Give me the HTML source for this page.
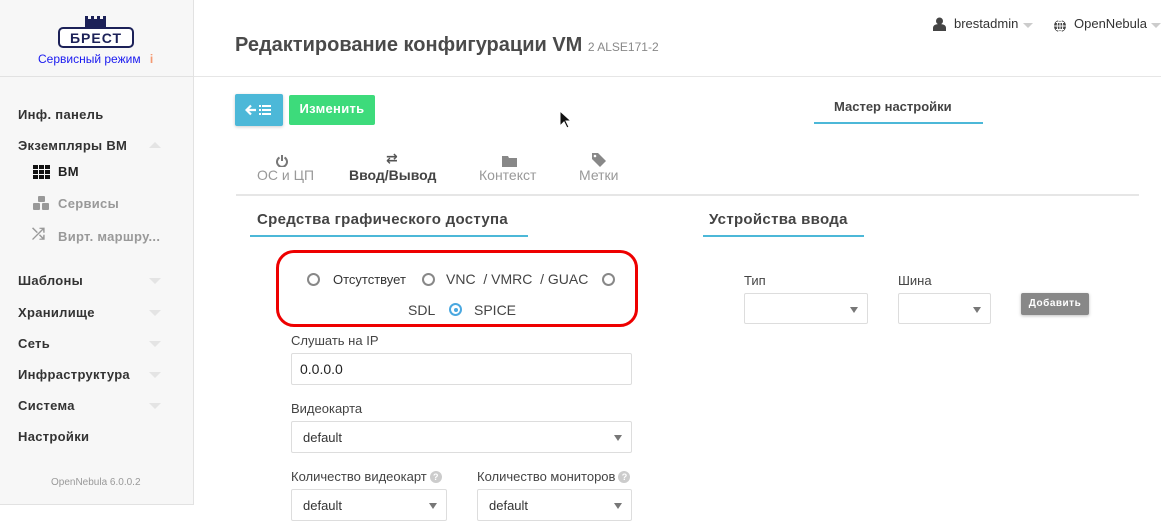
<!DOCTYPE html>
<html><head><meta charset="utf-8"><style>
*{box-sizing:border-box;margin:0;padding:0}
body{width:1161px;height:528px;overflow:hidden;background:#fff;font-family:"Liberation Sans","DejaVu Sans",sans-serif;color:#555;position:relative}
.a{position:absolute;white-space:nowrap}
#sb{position:absolute;left:0;top:0;width:194px;height:505px;background:#f7f7f7;border-right:1px solid #e2e2e2;border-bottom:1px solid #e2e2e2}
.nav{position:absolute;left:18px;font-size:13px;font-weight:bold;color:#333;letter-spacing:.3px}
.car{position:absolute;left:149px;width:0;height:0;border-left:6px solid transparent;border-right:6px solid transparent;border-top:6px solid #e4e4e4}
.sel{position:absolute;border:1px solid #ddd;border-radius:2px;background:#fff;height:32px;font-size:13px;color:#333;padding:8px 11px}
.sel:after{content:"";position:absolute;right:9px;top:13px;border-left:4px solid transparent;border-right:4px solid transparent;border-top:6px solid #777}
.lbl{position:absolute;font-size:13px;color:#444}
.rad{position:absolute;width:13px;height:13px;border:2px solid #888;border-radius:50%}
.q{display:inline-block;width:12px;height:12px;border-radius:50%;background:#ccc;color:#fff;font-size:9px;text-align:center;line-height:12px;font-weight:bold;vertical-align:1px;margin-left:3px}
</style></head><body>
<div id="sb">
 <svg class="a" style="left:55px;top:14px" width="80" height="36" viewBox="0 0 80 36">
  <path d="M30 2h3v3h3V2h3v3h3V2h3v3h3V2h3v13H30z" fill="#1c2158"/>
  <rect x="4" y="14" width="74" height="19" rx="4" fill="#fff" stroke="#1c2158" stroke-width="2"/>
  <text x="41" y="29" font-size="14" font-family="Liberation Sans" font-weight="bold" fill="#1c2158" text-anchor="middle" letter-spacing="1">БРЕСТ</text>
 </svg>
 <div class="a" style="left:38px;top:52px;font-size:12px;color:#1a1af0">Сервисный режим <span style="color:#f49a72;margin-left:6px;font-weight:bold">i</span></div>
 <div class="a" style="left:0;top:76px;width:193px;border-top:1px solid #e2e2e2"></div>
 <div class="nav" style="top:107px">Инф. панель</div>
 <div class="nav" style="top:138px">Экземпляры ВМ</div>
 <div class="a" style="left:149px;top:142px;border-left:6px solid transparent;border-right:6px solid transparent;border-bottom:6px solid #e4e4e4"></div>
 <svg class="a" style="left:33px;top:165px" width="17" height="15"><g fill="#111"><rect x="0" y="0" width="5" height="4"/><rect x="6" y="0" width="5" height="4"/><rect x="12" y="0" width="5" height="4"/><rect x="0" y="5" width="5" height="4"/><rect x="6" y="5" width="5" height="4"/><rect x="12" y="5" width="5" height="4"/><rect x="0" y="10" width="5" height="4"/><rect x="6" y="10" width="5" height="4"/><rect x="12" y="10" width="5" height="4"/></g></svg>
 <div class="nav" style="left:58px;top:164px;color:#222">ВМ</div>
 <svg class="a" style="left:33px;top:196px" width="17" height="16"><g fill="#999"><rect x="5" y="0" width="7" height="6" rx="1"/><rect x="0" y="7" width="7" height="7" rx="1"/><rect x="9" y="7" width="7" height="7" rx="1"/></g></svg>
 <div class="nav" style="left:58px;top:196px;color:#999">Сервисы</div>
 <div class="a" style="left:32px;top:226px;font-size:16px;color:#999;font-weight:bold">⤮</div>
 <div class="nav" style="left:58px;top:229px;color:#999">Вирт. маршру...</div>
 <div class="nav" style="top:273px">Шаблоны</div><div class="car" style="top:278px"></div>
 <div class="nav" style="top:305px">Хранилище</div><div class="car" style="top:310px"></div>
 <div class="nav" style="top:336px">Сеть</div><div class="car" style="top:341px"></div>
 <div class="nav" style="top:367px">Инфраструктура</div><div class="car" style="top:372px"></div>
 <div class="nav" style="top:398px">Система</div><div class="car" style="top:403px"></div>
 <div class="nav" style="top:429px">Настройки</div>
 <div class="a" style="left:51px;top:477px;font-size:10px;color:#999">OpenNebula 6.0.0.2</div>
</div>

<div class="a" style="left:235px;top:34px;font-size:20px;font-weight:bold;color:#4a4a4a">Редактирование конфигурации VM <span style="font-size:12px;font-weight:normal;color:#888">2 ALSE171-2</span></div>
<div class="a" style="left:194px;top:76px;width:967px;border-top:1px solid #e6e6e6"></div>

<svg class="a" style="left:933px;top:17px" width="13" height="14"><circle cx="6.5" cy="4" r="3.5" fill="#444"/><path d="M0 14v-3c0-3 3-4 6.5-4s6.5 1 6.5 4v3z" fill="#444"/></svg>
<div class="a" style="left:954px;top:16px;font-size:13px;color:#333">brestadmin</div>
<div class="a" style="left:1023px;top:23px;border-left:5px solid transparent;border-right:5px solid transparent;border-top:5px solid #ccc"></div>
<svg class="a" style="left:1053px;top:19px" width="14" height="14"><circle cx="7" cy="7" r="6" fill="#444"/><path d="M1 7h12M7 1v12M3 3.5h8M3 10.5h8" stroke="#fff" stroke-width="1"/><ellipse cx="7" cy="7" rx="2.8" ry="6" fill="none" stroke="#fff"/></svg>
<div class="a" style="left:1074px;top:16px;font-size:13px;color:#333">OpenNebula</div>
<div class="a" style="left:1151px;top:23px;border-left:5px solid transparent;border-right:5px solid transparent;border-top:5px solid #ccc"></div>

<div class="a" style="left:235px;top:94px;width:48px;height:32px;background:#4cb8d8;border-radius:2px;box-shadow:0 1px 3px rgba(0,0,0,.2)">
 <svg style="position:absolute;left:10px;top:9px" width="28" height="14"><path d="M2 7h9M6 2.5L1.5 7 6 11.5" fill="none" stroke="#fff" stroke-width="2.2"/><g fill="#fff"><rect x="14" y="2" width="2" height="2"/><rect x="17" y="2" width="9" height="2"/><rect x="14" y="6" width="2" height="2"/><rect x="17" y="6" width="9" height="2"/><rect x="14" y="10" width="2" height="2"/><rect x="17" y="10" width="9" height="2"/></g></svg>
</div>
<div class="a" style="left:289px;top:95px;width:86px;height:30px;background:#3ddb7b;border-radius:2px;color:#fff;font-size:13px;font-weight:bold;text-align:center;line-height:28px;letter-spacing:.3px">Изменить</div>
<svg class="a" style="left:559px;top:110px" width="12" height="20"><path d="M1 1v15l4-4 3 6 2-1-3-6h5z" fill="#111" stroke="#fff" stroke-width="1"/></svg>

<div class="a" style="left:834px;top:99px;font-size:13px;font-weight:bold;color:#444">Мастер настройки</div>
<div class="a" style="left:814px;top:122px;width:169px;border-top:2px solid #4cb8d8"></div>

<svg class="a" style="left:276px;top:154px" width="12" height="13"><path d="M3.5 3.5a5 5 0 1 0 5 0" fill="none" stroke="#777" stroke-width="2"/><path d="M6 1v6" stroke="#777" stroke-width="2"/></svg>
<div class="a" style="left:257px;top:167px;font-size:14px;color:#999">ОС и ЦП</div>
<div class="a" style="left:386px;top:150px;font-size:14px;color:#555;font-weight:bold">⇄</div>
<div class="a" style="left:349px;top:167px;font-size:14px;color:#444;font-weight:bold">Ввод/Вывод</div>
<svg class="a" style="left:502px;top:155px" width="15" height="12"><path d="M0 1h6l1 2h8v9H0z" fill="#888"/></svg>
<div class="a" style="left:479px;top:167px;font-size:14px;color:#999">Контекст</div>
<svg class="a" style="left:592px;top:153px" width="14" height="14"><path d="M0 0h6l8 8-6 6-8-8z" fill="#888"/><circle cx="3" cy="3" r="1.3" fill="#fff"/></svg>
<div class="a" style="left:579px;top:167px;font-size:14px;color:#999">Метки</div>
<div class="a" style="left:236px;top:194px;width:223px;border-top:2px solid #e6e6e6"></div>
<div class="a" style="left:459px;top:194px;width:680px;border-top:2px solid #e6e6e6"></div>

<div class="a" style="left:257px;top:211px;font-size:15px;font-weight:bold;color:#444;letter-spacing:.3px">Средства графического доступа</div>
<div class="a" style="left:250px;top:235px;width:278px;border-top:2px solid #4cb8d8"></div>
<div class="a" style="left:709px;top:211px;font-size:15px;font-weight:bold;color:#444;letter-spacing:.3px">Устройства ввода</div>
<div class="a" style="left:703px;top:235px;width:161px;border-top:2px solid #4cb8d8"></div>

<div class="a" style="left:276px;top:250px;width:362px;height:77px;border:3px solid #ee0000;border-radius:18px"></div>
<div class="rad" style="left:307px;top:273px"></div>
<div class="a" style="left:333px;top:272px;font-size:13px;color:#333">Отсутствует</div>
<div class="rad" style="left:422px;top:273px"></div>
<div class="a" style="left:446px;top:271px;font-size:14px;color:#444">VNC &nbsp;/ VMRC &nbsp;/ GUAC</div>
<div class="rad" style="left:602px;top:273px"></div>
<div class="a" style="left:408px;top:302px;font-size:14px;color:#444">SDL</div>
<div class="rad" style="left:449px;top:303px;border-color:#4aa8e0"><div style="position:absolute;left:2.5px;top:2.5px;width:4px;height:4px;border-radius:50%;background:#4aa8e0"></div></div>
<div class="a" style="left:474px;top:302px;font-size:14px;color:#444">SPICE</div>

<div class="lbl" style="left:291px;top:333px">Слушать на IP</div>
<div class="a" style="left:291px;top:353px;width:341px;height:32px;border:1px solid #ddd;border-radius:2px;font-size:14px;color:#222;padding:7px 8px">0.0.0.0</div>
<div class="lbl" style="left:291px;top:401px">Видеокарта</div>
<div class="sel" style="left:291px;top:421px;width:341px">default</div>
<div class="lbl" style="left:291px;top:469px">Количество видеокарт<span class="q">?</span></div>
<div class="sel" style="left:291px;top:489px;width:156px">default</div>
<div class="lbl" style="left:477px;top:469px">Количество мониторов<span class="q">?</span></div>
<div class="sel" style="left:477px;top:489px;width:155px">default</div>

<div class="lbl" style="left:744px;top:273px">Тип</div>
<div class="sel" style="left:744px;top:293px;width:124px;height:31px"></div>
<div class="lbl" style="left:898px;top:273px">Шина</div>
<div class="sel" style="left:898px;top:293px;width:93px;height:31px"></div>
<div class="a" style="left:1021px;top:293px;width:68px;height:22px;background:#888;border-radius:2px;box-shadow:0 1px 3px rgba(0,0,0,.25);color:#fff;font-size:10px;font-weight:bold;text-align:center;line-height:22px;letter-spacing:.5px">Добавить</div>
</body></html>
